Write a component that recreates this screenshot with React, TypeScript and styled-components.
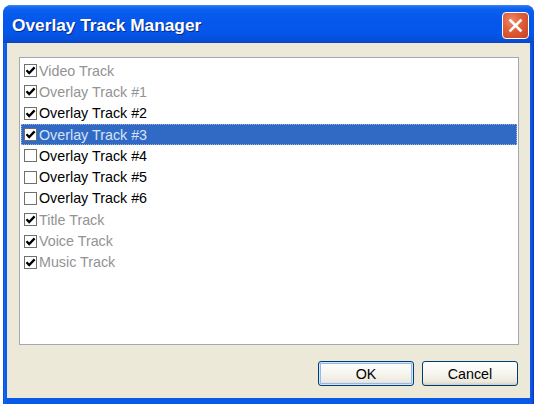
import React from "react";
import styled, { createGlobalStyle } from "styled-components";

const GlobalStyle = createGlobalStyle`
  html, body { margin: 0; padding: 0; background: #ffffff; }
  body { font-family: "Liberation Sans", Arial, sans-serif; }
  * { box-sizing: border-box; }
`;

const Page = styled.div`
  padding: 5px 3px 0 3px;
  width: 537px;
  height: 409px;
`;

const Window = styled.div`
  width: 531px;
  height: 399px;
  display: flex;
  flex-direction: column;
  border-radius: 8px 8px 0 0;
  background: linear-gradient(to right, #0831d9 0, #166aee 1px, #0a5ae8 3px, #0a5ae8 calc(100% - 3px), #0a46c8 calc(100% - 1px), #0831d9 100%);
  overflow: hidden;
`;

const TitleBar = styled.div`
  height: 38px;
  flex: none;
  display: flex;
  align-items: center;
  justify-content: space-between;
  padding: 0 5px 0 9px;
  background: linear-gradient(
    to bottom,
    #3d8cf5 0px,
    #1a6cf2 2px,
    #0a5fee 5px,
    #0558eb 14px,
    #0456e8 28px,
    #0650dc 34px,
    #0a46c4 38px
  );
  border-radius: 8px 8px 0 0;
`;

const Title = styled.span`
  color: #ffffff;
  font-family: "Liberation Sans", Arial, sans-serif;
  font-weight: bold;
  font-size: 17.3px;
  letter-spacing: 0px;
  text-shadow: 1px 1px 0 #0a2a8a;
  margin-top: 3px;
`;

const CloseButton = styled.div`
  width: 27px;
  height: 27px;
  margin-top: 3px;
  border: 1px solid #ffffff;
  border-radius: 4px;
  background: radial-gradient(circle at 35% 30%, #ee8a6a 0%, #e0603c 40%, #c8401e 100%);
  display: flex;
  align-items: center;
  justify-content: center;
`;

const Body = styled.div`
  flex: 1;
  margin: 0 4px 6px 4px;
  background: #ece9d8;
  padding: 14px 11px 0 12px;
  display: flex;
  flex-direction: column;
`;

const ListBox = styled.div`
  height: 288px;
  background: #ffffff;
  border: 1px solid #a3a9b3;
  padding: 2px 1px 0 1px;
  display: flex;
  flex-direction: column;
`;

const Row = styled.div<{ $selected?: boolean }>`
  height: 21.33px;
  flex: none;
  display: flex;
  align-items: center;
  padding-left: 2px;
  background: ${(p) => (p.$selected ? "#316ac5" : "transparent")};
  border: 1px ${(p) => (p.$selected ? "dotted #9bb0d8" : "solid transparent")};
`;

const Box = styled.div`
  width: 13px;
  height: 13px;
  flex: none;
  border: 1px solid #6f6f6f;
  background: #ffffff;
  display: flex;
  align-items: center;
  justify-content: center;
`;

const Label = styled.span<{ $tone: "gray" | "black" | "selected" }>`
  margin-left: 2px;
  font-family: "Liberation Sans", Arial, sans-serif;
  font-size: 14.3px;
  line-height: 1;
  color: ${(p) =>
    p.$tone === "gray" ? "#939393" : p.$tone === "selected" ? "#d6e2f6" : "#000000"};
`;

const ButtonRow = styled.div`
  margin-top: 16px;
  display: flex;
  justify-content: flex-end;
  gap: 8px;
  padding-right: 1px;
`;

const Button = styled.div<{ $default?: boolean }>`
  width: 96px;
  height: 25px;
  border: 1px solid #003c74;
  border-radius: 3px;
  background: linear-gradient(to bottom, #ffffff 0%, #f6f5ef 50%, #ece9de 85%, #d6d0c5 100%);
  box-shadow: ${(p) =>
    p.$default
      ? "inset 0 0 0 1px #cee7ff, inset 0 0 0 2px #98b8ea"
      : "inset 0 -1px 0 #d6d0c5"};
  display: flex;
  align-items: center;
  justify-content: center;
  font-family: "Liberation Sans", Arial, sans-serif;
  font-size: 14.3px;
  color: #000000;
`;

const Check = () => (
  <svg width="11" height="11" viewBox="0 0 11 11">
    <path d="M1.5 5.2 L4.2 8 L9.6 2.4" fill="none" stroke="#000" strokeWidth="2.3" strokeLinecap="butt" strokeLinejoin="miter" />
  </svg>
);

const CloseX = () => (
  <svg width="15" height="15" viewBox="0 0 15 15">
    <path d="M2.5 2.5 L12.5 12.5 M12.5 2.5 L2.5 12.5" stroke="#ffffff" strokeWidth="2.6" strokeLinecap="square" />
  </svg>
);

type Track = { name: string; checked: boolean; tone: "gray" | "black"; selected?: boolean };

const tracks: Track[] = [
  { name: "Video Track", checked: true, tone: "gray" },
  { name: "Overlay Track #1", checked: true, tone: "gray" },
  { name: "Overlay Track #2", checked: true, tone: "black" },
  { name: "Overlay Track #3", checked: true, tone: "black", selected: true },
  { name: "Overlay Track #4", checked: false, tone: "black" },
  { name: "Overlay Track #5", checked: false, tone: "black" },
  { name: "Overlay Track #6", checked: false, tone: "black" },
  { name: "Title Track", checked: true, tone: "gray" },
  { name: "Voice Track", checked: true, tone: "gray" },
  { name: "Music Track", checked: true, tone: "gray" },
];

export default function App() {
  return (
    <>
      <GlobalStyle />
      <Page>
        <Window>
          <TitleBar>
            <Title>Overlay Track Manager</Title>
            <CloseButton>
              <CloseX />
            </CloseButton>
          </TitleBar>
          <Body>
            <ListBox>
              {tracks.map((t) => (
                <Row key={t.name} $selected={t.selected}>
                  <Box>{t.checked && <Check />}</Box>
                  <Label $tone={t.selected ? "selected" : t.tone}>{t.name}</Label>
                </Row>
              ))}
            </ListBox>
            <ButtonRow>
              <Button $default>OK</Button>
              <Button>Cancel</Button>
            </ButtonRow>
          </Body>
        </Window>
      </Page>
    </>
  );
}
